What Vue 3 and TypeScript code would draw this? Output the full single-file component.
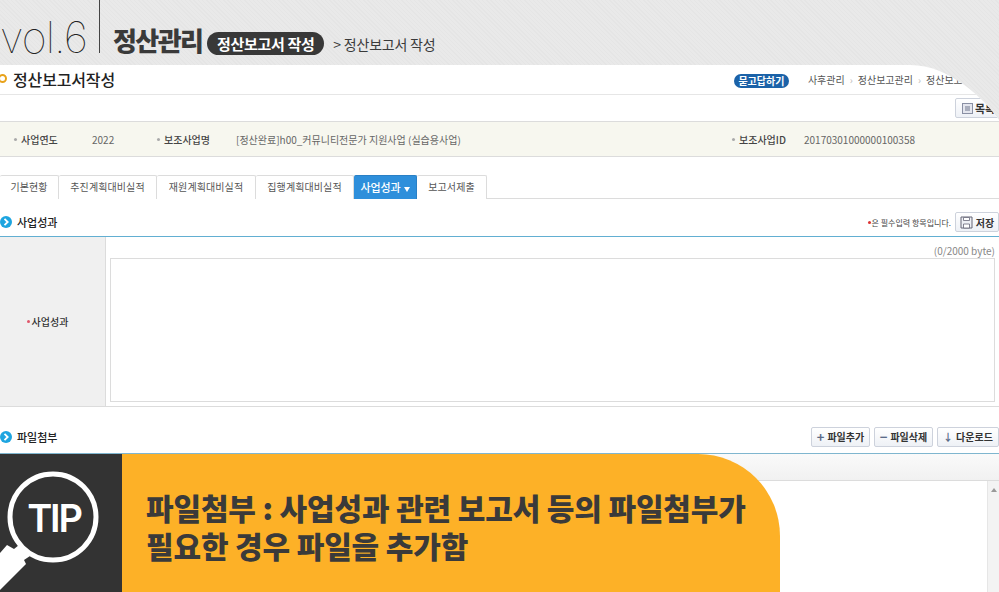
<script setup lang="ts">
const tabs = ['기본현황', '추진계획대비실적', '재원계획대비실적', '집행계획대비실적', '사업성과', '보고서제출']
</script>

<template>
  <div class="page">
    <header class="head">
      <span class="vol">vol.6</span>
      <span class="divider"></span>
      <span class="cat">정산관리</span>
      <span class="pill">정산보고서 작성</span>
      <span class="crumb-top">&gt; 정산보고서 작성</span>
    </header>

    <main class="panel">
      <div class="title-row">
        <span class="ring"></span>
        <h1>정산보고서작성</h1>
        <span class="ask">묻고답하기</span>
        <span class="path">사후관리</span>
        <span class="sep">›</span>
        <span class="path">정산보고관리</span>
        <span class="sep">›</span>
        <span class="path">정산보고서작성</span>
      </div>

      <div class="toolbar">
        <button class="btn list-btn">
          <svg width="11" height="11" viewBox="0 0 11 11"><rect x=".5" y=".5" width="10" height="10" fill="#e4e6ee" stroke="#8a90a4"/><rect x="3" y="3" width="5" height="5" fill="#a9aebd"/></svg>
          목록
        </button>
      </div>

      <div class="info">
        <span class="lab l1">사업연도</span><span class="val v1">2022</span>
        <span class="lab l2">보조사업명</span><span class="val v2">[정산완료]h00_커뮤니티전문가 지원사업 (실습용사업)</span>
        <span class="lab l3">보조사업ID</span><span class="val">20170301000000100358</span>
      </div>

      <nav class="tabs">
        <span v-for="t in tabs" :key="t" class="tab" :class="{ on: t === '사업성과' }">{{ t }}<i v-if="t === '사업성과'" class="caret"></i></span>
      </nav>

      <div class="sec-head first">
        <span class="badge"><svg width="12" height="12" viewBox="0 0 12 12"><path d="M4.5 2.8 7.7 6 4.5 9.2" fill="none" stroke="#fff" stroke-width="1.8"/></svg></span>
        <h2>사업성과</h2>
        <span class="req"><b></b>은 필수입력 항목입니다.</span>
        <button class="btn save">
          <svg width="13" height="13" viewBox="0 0 13 13"><path d="M1 1h11v11H1z" fill="#eef0f5" stroke="#667"/><path d="M3.5 1.5h6v3h-6zM3.5 8h6v4h-6z" fill="#fff" stroke="#667" stroke-width=".8"/></svg>
          저장
        </button>
      </div>

      <section class="form-table">
        <div class="th"><b></b>사업성과</div>
        <div class="td">
          <div class="bytes">(0/2000 byte)</div>
          <div class="textarea"></div>
        </div>
      </section>

      <div class="sec-head second">
        <span class="badge"><svg width="12" height="12" viewBox="0 0 12 12"><path d="M4.5 2.8 7.7 6 4.5 9.2" fill="none" stroke="#fff" stroke-width="1.8"/></svg></span>
        <h2>파일첨부</h2>
        <span class="file-btns">
          <button class="btn file"><em>+</em>파일추가</button>
          <button class="btn file"><em>−</em>파일삭제</button>
          <button class="btn file"><em class="dl">↓</em>다운로드</button>
        </span>
      </div>

      <section class="file-table">
        <div class="file-head"></div>
        <div class="file-body"><span class="scroll"><i></i></span></div>
      </section>
    </main>

    <aside class="tip">
      <div class="tip-icon">
        <svg width="122" height="138" viewBox="0 0 122 138">
          <circle cx="53" cy="63" r="43" fill="none" stroke="#fff" stroke-width="5"/>
          <path d="M0 99 7 91 14 95 19 91 30 102 24 106 26 110 0 136Z" fill="#fff"/>
        </svg>
        <span class="tip-word">TIP</span>
      </div>
      <div class="tip-card">
        <p>파일첨부 : 사업성과 관련 보고서 등의 파일첨부가<br />필요한 경우 파일을 추가함</p>
      </div>
    </aside>
  </div>
</template>

<style>
html, body { margin: 0; padding: 0; }
</style>

<style scoped>
* { box-sizing: border-box; }
.page {
  position: relative;
  width: 999px;
  height: 592px;
  overflow: hidden;
  font-family: "Noto Sans CJK KR", "Noto Sans", sans-serif;
  background-color: #e9e9e9;
  background-image: repeating-linear-gradient(45deg, #e5e5e5 0 1px, transparent 1px 3px);
  color: #333;
}
.head {
  height: 65px;
  display: flex;
  align-items: flex-start;
  position: relative;
}
.vol {
  font-family: "Inter", "Liberation Sans", sans-serif;
  font-weight: 100;
  font-size: 43px;
  line-height: 44px;
  letter-spacing: -0.9px;
  color: #222;
  margin-top: 15px;
  width: 99px;
}
.divider { width: 1px; height: 53px; background: #444; }
.cat {
  font-size: 26px;
  line-height: 30px;
  font-weight: 900;
  color: #3a3a3a;
  margin: 25px 0 0 13px;
  letter-spacing: -1.6px;
}
.pill {
  margin: 32px 0 0 5px;
  width: 117px;
  height: 23px;
  border-radius: 12px;
  background: #383838;
  color: #fff;
  font-size: 15px;
  font-weight: 700;
  line-height: 23px;
  text-align: center;
  letter-spacing: -0.3px;
  white-space: nowrap;
}
.crumb-top {
  margin: 33px 0 0 9px;
  font-size: 14px;
  line-height: 22px;
  color: #3a3a3a;
  letter-spacing: -0.2px;
}
.panel {
  height: 527px;
  background: #fff;
  clip-path: path('M0 0 H910 C 950 0, 985 35, 999 55 V527 H0 Z');
  overflow: hidden;
}
.title-row {
  height: 30px;
  border-bottom: 1px solid #e6e6e6;
  display: flex;
  align-items: center;
}
.ring {
  width: 9px; height: 9px;
  border: 2.5px solid #e8a21a;
  border-radius: 50%;
  margin-left: -2px;
  margin-bottom: 2px;
}
h1 {
  font-size: 16px;
  font-weight: 500;
  margin: 0 0 2px 6px;
  color: #222;
  flex: 1;
  letter-spacing: -0.15px;
}
.ask {
  width: 55px; height: 14px;
  background: #1b62a8;
  color: #fff;
  border-radius: 7px;
  font-size: 10px;
  font-weight: 700;
  line-height: 14px;
  text-align: center;
  margin: 2px 19px 0 0;
}
.path { font-size: 10px; color: #555; white-space: nowrap; }
.sep { font-size: 10px; color: #bbb; margin: 0 5px; }
.path:last-child { width: 73px; }
.toolbar {
  height: 26px;
  display: flex;
  justify-content: flex-end;
  padding-top: 3px;
}
.btn {
  font-family: inherit;
  padding: 0;
  background: linear-gradient(#fff, #eef1f6);
  border: 1px solid #cdd2dc;
  border-radius: 2px;
  color: #333;
  font-size: 10px;
  font-weight: 700;
  display: inline-flex;
  align-items: center;
  justify-content: center;
  gap: 3px;
}
.list-btn { width: 44px; height: 20px; justify-content: flex-start; padding-left: 6px; gap: 2px; font-size: 11px; }
.info {
  height: 36px;
  background: #f7f7ef;
  border-top: 1px solid #dcdcdc;
  border-bottom: 1px solid #dcdcdc;
  display: flex;
  align-items: center;
  font-size: 10px;
}
.lab { font-weight: 500; color: #444; position: relative; white-space: nowrap; }
.lab::before {
  content: "";
  position: absolute;
  left: -7px; top: 6px;
  width: 3px; height: 3px;
  border-radius: 50%;
  background: #aaa;
}
.val { color: #666; white-space: nowrap; }
.l1 { margin-left: 21px; width: 71px; }
.v1 { width: 72px; }
.l2 { width: 72px; }
.v2 { width: 503px; }
.l3 { width: 65px; }
.tabs {
  margin-top: 18px;
  height: 24px;
  display: flex;
  border-bottom: 1px solid #dcdcdc;
}
.tab {
  height: 24px;
  padding: 0;
  background: #fff;
  border: 1px solid #dcdcdc;
  border-left: 0;
  border-bottom: 0;
  font-size: 10px;
  color: #555;
  line-height: 22px;
  text-align: center;
  white-space: nowrap;
  border-radius: 2px 2px 0 0;
  letter-spacing: 0.1px;
}
.tab:nth-child(1) { width: 59px; }
.tab:nth-child(2) { width: 98px; }
.tab:nth-child(3) { width: 99px; }
.tab:nth-child(4) { width: 98px; }
.tab.on { width: 63px; background: #2e8fdb; color: #fff; border-color: #2a80c5; font-weight: 500; font-size: 11px; letter-spacing: -0.1px; }
.tab:nth-child(6) { width: 70px; }
.caret {
  display: inline-block;
  margin-left: 3px;
  border: 3.5px solid transparent;
  border-top: 5px solid #fff;
  border-bottom: 0;
  vertical-align: 0;
}
.sec-head { display: flex; align-items: center; position: relative; }
.sec-head.first { height: 31px; margin-top: 6px; padding-top: 3px; }
.sec-head.second { height: 33px; margin-top: 13px; }
.badge {
  width: 12px; height: 12px;
  border-radius: 50%;
  background: #1ea5e0;
  display: inline-flex;
  margin-right: 5px;
}
h2 { font-size: 11px; font-weight: 500; margin: 0; color: #222; flex: 1; }
.req { font-size: 8px; color: #444; margin-right: 4px; white-space: nowrap; }
.req b { display: inline-block; width: 3px; height: 3px; border-radius: 50%; background: #d33; margin-right: 1px; vertical-align: 2px; }
.save { width: 44px; height: 20px; }
.form-table {
  height: 171px;
  display: flex;
  border-top: 1px solid #62afd2;
  border-bottom: 1px solid #dcdcdc;
}
.th {
  width: 106px;
  background: #f0f0f0;
  border-right: 1px solid #dcdcdc;
  font-size: 10px;
  font-weight: 500;
  color: #333;
  display: flex;
  align-items: center;
  justify-content: center;
  gap: 2px;
  padding-right: 10px;
}
.th b { width: 3px; height: 3px; border-radius: 50%; background: #e0566a; }
.td { flex: 1; padding: 0 4px 4px; display: flex; flex-direction: column; }
.bytes { height: 21px; font-size: 10px; color: #888; text-align: right; line-height: 27px; }
.textarea { flex: 1; border: 1px solid #dcdcdc; }
.file-btns { display: flex; gap: 4px; }
.file { height: 20px; }
.file:nth-child(1) { width: 59px; }
.file:nth-child(2) { width: 59px; }
.file:nth-child(3) { width: 62px; }
.file em { font-style: normal; font-size: 13px; font-weight: 700; color: #5b6b88; line-height: 1; }
.file em.dl { font-size: 10px; }
.file-table { border-top: 1px solid #7fb6cf; height: 140px; }
.file-head { height: 27px; background: linear-gradient(#fafafa, #f1f1f1); border-bottom: 1px solid #dcdcdc; }
.file-body { height: 112px; display: flex; justify-content: flex-end; }
.scroll { width: 12px; background: #f3f3f3; border-left: 1px solid #e6e6e6; display: flex; justify-content: center; padding-top: 7px; }
.scroll i { width: 0; height: 0; border: 3px solid transparent; border-bottom: 4px solid #999; border-top: 0; }
.tip {
  position: absolute;
  left: 0; right: 0; bottom: 0;
  height: 138px;
  display: flex;
  pointer-events: none;
}
.tip-icon {
  width: 122px;
  background: #333;
  position: relative;
  overflow: hidden;
}
.tip-icon svg { display: block; }
.tip-word {
  position: absolute;
  left: 27px; top: 44px;
  width: 54px;
  text-align: center;
  color: #fff;
  font-family: "Inter", "Liberation Sans", sans-serif;
  font-size: 38px;
  line-height: 40px;
  font-weight: 600;
  letter-spacing: -2.2px;
}
.tip-card {
  width: 658px;
  background: #fdb127;
  border-top-right-radius: 82px 82px;
  padding: 34px 0 0 24px;
}
.tip-card p {
  margin: 0;
  font-size: 30px;
  line-height: 38px;
  font-weight: 900;
  color: #3a3a3a;
  letter-spacing: -0.15px;
  white-space: nowrap;
}
</style>
